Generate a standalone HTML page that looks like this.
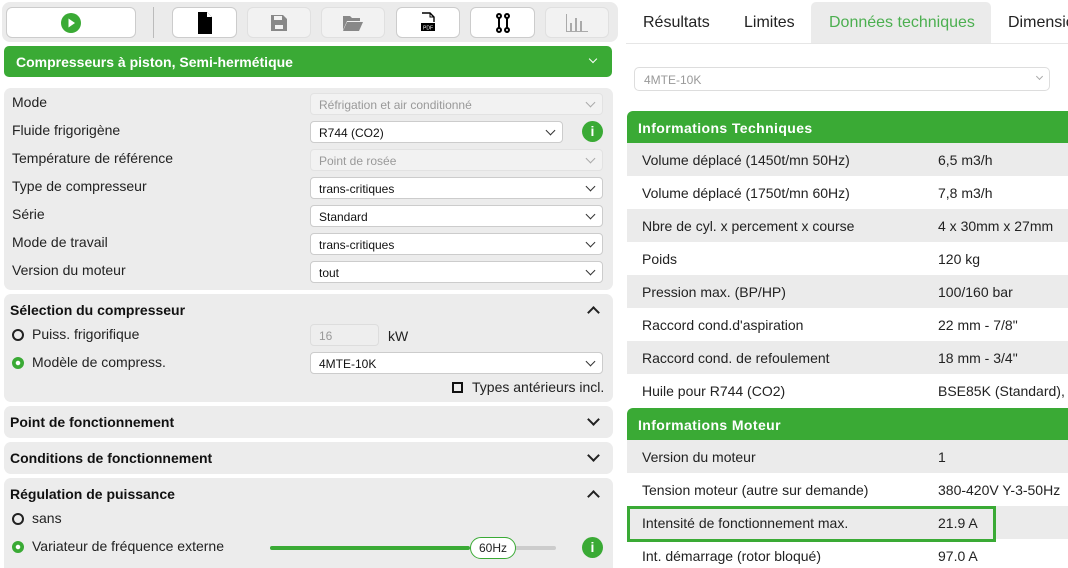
<!DOCTYPE html>
<html><head><meta charset="utf-8"><style>
*{box-sizing:border-box;margin:0;padding:0}
html,body{width:1068px;height:568px;overflow:hidden}
body{background:#fff;font-family:"Liberation Sans",Arial,sans-serif;color:#222;position:relative}
#w{position:absolute;left:0;top:0;width:1068px;height:568px;overflow:hidden}
.a{position:absolute}
.tb{left:2px;top:2px;width:616px;height:40px;background:#ebebeb;border-radius:8px}
.btn{position:absolute;top:7px;height:31px;background:#fff;border:1px solid #ccc;border-radius:6px;display:flex;align-items:center;justify-content:center}
.btn.d{background:#f2f2f2;border-color:#e0e0e0}
.gh{left:4px;top:46px;width:608px;height:31px;background:#3aaa35;border-radius:5px;color:#fff;font-weight:bold;font-size:14px;padding:8px 0 0 12px}
.panel{position:absolute;left:4px;width:609px;background:#ececec;border-radius:7px}
.lbl{position:absolute;left:12px;font-size:14px;color:#222}
.sel{position:absolute;left:310px;width:293px;height:22px;background:#fff;border:1px solid #ccc;border-radius:4px;font-size:12px;padding:4px 0 0 8px;color:#111}
.sel.d{background:#f2f2f2;border-color:#e2e2e2;color:#999}
.sel::after{content:"";position:absolute;right:8px;top:5px;width:6px;height:6px;border-right:1.3px solid #333;border-bottom:1.3px solid #333;transform:rotate(45deg)}
.sel.d::after{border-color:#aaa}
.sel.n::after{display:none}
.ph{position:absolute;left:10px;font-weight:bold;font-size:14px;color:#111}
.chev{position:absolute;left:589px;width:9px;height:9px;border-right:2px solid #222;border-bottom:2px solid #222}
.dn{transform:rotate(45deg)}
.up{transform:rotate(-135deg)}
.rad{position:absolute;left:12px;width:12px;height:12px;border:2.5px solid #222;border-radius:50%}
.rad.g{border-color:#3aaa35;background:radial-gradient(circle,#fff 2px,#3aaa35 2.5px)}
.info{position:absolute;width:21px;height:21px;border-radius:50%;background:#3aaa35;color:#fff;font-weight:bold;font-size:14px;text-align:center;line-height:21px}
.tab{position:absolute;top:0;height:44px;font-size:16px;padding-top:14px;white-space:nowrap}
.row{position:absolute;left:627px;width:441px;height:33px;font-size:14px;color:#222;overflow:hidden}
.row.g{background:#ebebeb}
.row span{position:absolute;top:9px;white-space:nowrap}
.row .k{left:15px}.row .v{left:311px}
.th{position:absolute;left:627px;width:441px;height:32px;background:#3aaa35;color:#fff;font-weight:bold;font-size:14px;padding:9px 0 0 11px;border-radius:6px 0 0 0;letter-spacing:.4px}
</style></head><body><div id="w">
<div class="a tb"></div>
<div class="btn" style="left:6px;width:130px"><svg width="20" height="20"><circle cx="10" cy="10" r="10" fill="#3aaa35"/><path d="M7.5 5.5L14 10 7.5 14.5Z" fill="#fff"/></svg></div>
<div class="a" style="left:153px;top:7px;width:1px;height:31px;background:#bbb"></div>
<div class="btn" style="left:172px;width:65px"><svg width="16" height="22"><path d="M1 0H10L15 5V22H1Z" fill="#000"/><path d="M10 0V5H15" fill="#fff"/></svg></div>
<div class="btn d" style="left:247px;width:64px"><svg width="16" height="16"><path d="M0 0H12L16 4V16H0Z" fill="#888"/><rect x="3" y="1" width="8" height="4" fill="#f2f2f2"/><rect x="4" y="10" width="8" height="4" fill="#f2f2f2"/></svg></div>
<div class="btn d" style="left:321px;width:64px"><svg width="20" height="16"><path d="M0 1H7L9 3H17V6H4L0 15Z" fill="#888"/><path d="M4 7H20L16 16H0Z" fill="#888"/></svg></div>
<div class="btn" style="left:396px;width:64px"><svg width="16" height="22"><path d="M2 1H10L14 5V10" fill="none" stroke="#000" stroke-width="1.4"/><path d="M10 1V5H14" fill="none" stroke="#000"/><rect x="1" y="11" width="14" height="8" fill="#000"/><text x="8" y="17.5" font-size="5" fill="#fff" text-anchor="middle" font-family="Liberation Sans">PDF</text></svg></div>
<div class="btn" style="left:470px;width:65px"><svg width="16" height="22"><g fill="none" stroke="#000" stroke-width="2"><circle cx="4" cy="4" r="2"/><circle cx="4" cy="18" r="2"/><circle cx="12" cy="4" r="2"/><circle cx="12" cy="18" r="2"/><path d="M4 6V16M12 6V16"/></g></svg></div>
<div class="btn d" style="left:545px;width:64px"><svg width="22" height="18"><g fill="#aaa"><rect x="0" y="0" width="1" height="18"/><rect x="0" y="17" width="22" height="1"/><rect x="4" y="9" width="2" height="8"/><rect x="9" y="4" width="2" height="13"/><rect x="14" y="7" width="2" height="10"/></g></svg></div>
<div class="a gh">Compresseurs à piston, Semi-hermétique</div>
<div class="a" style="left:590px;top:56px;width:6px;height:6px;border-right:1px solid #fff;border-bottom:1px solid #fff;transform:rotate(45deg)"></div>

<div class="panel" style="top:88px;height:202px"></div>
<div class="lbl" style="top:94px">Mode</div>
<div class="lbl" style="top:122px">Fluide frigorigène</div>
<div class="lbl" style="top:150px">Température de référence</div>
<div class="lbl" style="top:178px">Type de compresseur</div>
<div class="lbl" style="top:206px">Série</div>
<div class="lbl" style="top:234px">Mode de travail</div>
<div class="lbl" style="top:262px">Version du moteur</div>
<div class="sel d" style="top:93px">Réfrigation et air conditionné</div>
<div class="sel" style="top:121px;width:253px">R744 (CO2)</div>
<div class="info" style="left:582px;top:121px">i</div>
<div class="sel d" style="top:149px">Point de rosée</div>
<div class="sel" style="top:177px">trans-critiques</div>
<div class="sel" style="top:205px">Standard</div>
<div class="sel" style="top:233px">trans-critiques</div>
<div class="sel" style="top:261px">tout</div>

<div class="panel" style="top:294px;height:108px"></div>
<div class="ph" style="top:302px">Sélection du compresseur</div>
<div class="chev up" style="top:308px"></div>
<div class="rad" style="top:329px"></div><div class="lbl" style="top:326px;left:32px">Puiss. frigorifique</div>
<div class="sel d n" style="top:324px;width:69px;background:#eee;border-color:#ddd">16</div>
<div class="lbl" style="top:328px;left:388px">kW</div>
<div class="rad g" style="top:357px"></div><div class="lbl" style="top:354px;left:32px">Modèle de compress.</div>
<div class="sel" style="top:352px">4MTE-10K</div>
<div class="a" style="left:452px;top:382px;width:11px;height:11px;border:2px solid #111"></div>
<div class="lbl" style="top:379px;left:472px">Types antérieurs incl.</div>

<div class="panel" style="top:406px;height:32px"></div>
<div class="ph" style="top:414px">Point de fonctionnement</div>
<div class="chev dn" style="top:415px"></div>
<div class="panel" style="top:442px;height:32px"></div>
<div class="ph" style="top:450px">Conditions de fonctionnement</div>
<div class="chev dn" style="top:451px"></div>
<div class="panel" style="top:478px;height:100px"></div>
<div class="ph" style="top:486px">Régulation de puissance</div>
<div class="chev up" style="top:492px"></div>
<div class="rad" style="top:513px"></div><div class="lbl" style="top:510px;left:32px">sans</div>
<div class="rad g" style="top:541px"></div><div class="lbl" style="top:538px;left:32px">Variateur de fréquence externe</div>
<div class="a" style="left:270px;top:546px;width:200px;height:4px;background:#3aaa35;border-radius:2px"></div>
<div class="a" style="left:470px;top:546px;width:86px;height:4px;background:#ccc;border-radius:2px"></div>
<div class="a" style="left:470px;top:537px;width:46px;height:22px;background:#fff;border:1px solid #3aaa35;border-radius:11px;font-size:12px;text-align:center;line-height:20px">60Hz</div>
<div class="info" style="left:582px;top:537px">i</div>

<div class="tab" style="left:643px">Résultats</div>
<div class="tab" style="left:744px">Limites</div>
<div class="a" style="left:811px;top:2px;width:180px;height:42px;background:#ebebeb;border-radius:5px 5px 0 0"></div>
<div class="tab" style="left:829px;color:#4caf50">Données techniques</div>
<div class="tab" style="left:1008px">Dimensions</div>
<div class="a" style="left:626px;top:43px;width:442px;height:1px;background:#e6e6e6"></div>
<div class="a" style="left:634px;top:67px;width:416px;height:24px;border:1px solid #ddd;border-radius:5px;font-size:12px;color:#999;padding:5px 0 0 9px">4MTE-10K</div>
<div class="a" style="left:1037px;top:74px;width:5px;height:5px;border-right:1px solid #aaa;border-bottom:1px solid #aaa;transform:rotate(45deg)"></div>

<div class="th" style="top:111px">Informations Techniques</div>
<div class="row g" style="top:143px"><span class="k">Volume déplacé (1450t/mn 50Hz)</span><span class="v">6,5 m3/h</span></div>
<div class="row" style="top:176px"><span class="k">Volume déplacé (1750t/mn 60Hz)</span><span class="v">7,8 m3/h</span></div>
<div class="row g" style="top:209px"><span class="k">Nbre de cyl. x percement x course</span><span class="v">4 x 30mm x 27mm</span></div>
<div class="row" style="top:242px"><span class="k">Poids</span><span class="v">120 kg</span></div>
<div class="row g" style="top:275px"><span class="k">Pression max. (BP/HP)</span><span class="v">100/160 bar</span></div>
<div class="row" style="top:308px"><span class="k">Raccord cond.d'aspiration</span><span class="v">22 mm - 7/8"</span></div>
<div class="row g" style="top:341px"><span class="k">Raccord cond. de refoulement</span><span class="v">18 mm - 3/4"</span></div>
<div class="row" style="top:374px"><span class="k">Huile pour R744 (CO2)</span><span class="v">BSE85K (Standard), RFL68EP</span></div>
<div class="th" style="top:408px">Informations Moteur</div>
<div class="row g" style="top:440px"><span class="k">Version du moteur</span><span class="v">1</span></div>
<div class="row" style="top:473px"><span class="k">Tension moteur (autre sur demande)</span><span class="v">380-420V Y-3-50Hz</span></div>
<div class="row g" style="top:506px"><span class="k">Intensité de fonctionnement max.</span><span class="v">21.9 A</span></div>
<div class="a" style="left:627px;top:506px;width:369px;height:36px;border:3px solid #3aaa35"></div>
<div class="row" style="top:539px"><span class="k">Int. démarrage (rotor bloqué)</span><span class="v">97.0 A</span></div>
</div></body></html>
